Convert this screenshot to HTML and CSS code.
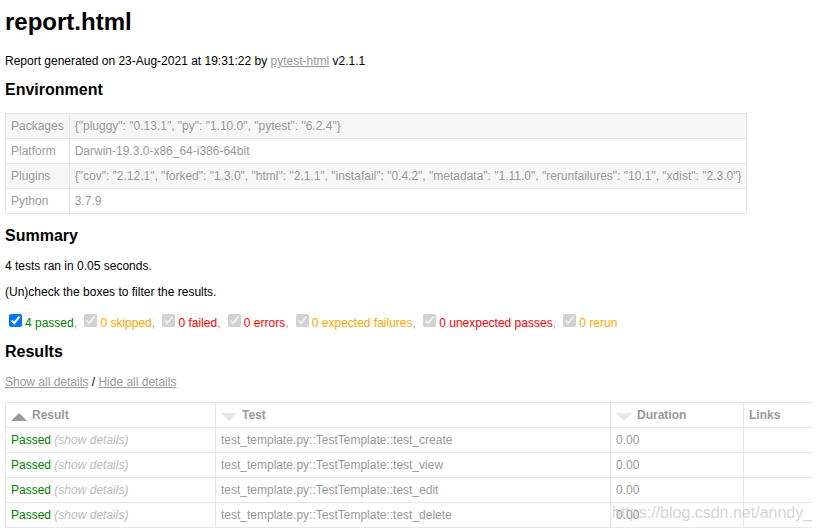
FILE: index.html
```html
<!DOCTYPE html>
<html>
<head>
<meta charset="utf-8">
<title>Test Report</title>
<link rel="stylesheet" href="styles.css">
</head>
<body>
<h1>report.html</h1>
<p>Report generated on 23-Aug-2021 at 19:31:22 by <a href="#">pytest-html</a> v2.1.1</p>
<h2>Environment</h2>
<table id="environment">
  <tr><td>Packages</td><td>{"pluggy": "0.13.1", "py": "1.10.0", "pytest": "6.2.4"}</td></tr>
  <tr><td>Platform</td><td>Darwin-19.3.0-x86_64-i386-64bit</td></tr>
  <tr><td>Plugins</td><td>{"cov": "2.12.1", "forked": "1.3.0", "html": "2.1.1", "instafail": "0.4.2", "metadata": "1.11.0", "rerunfailures": "10.1", "xdist": "2.3.0"}</td></tr>
  <tr><td>Python</td><td>3.7.9</td></tr>
</table>
<h2>Summary</h2>
<p>4 tests ran in 0.05 seconds. </p>
<p class="filter">(Un)check the boxes to filter the results.</p>
<div class="filters"><input checked type="checkbox" class="filter-box"><span class="passed">4 passed</span>, <input checked disabled type="checkbox" class="filter-box"><span class="skipped">0 skipped</span>, <input checked disabled type="checkbox" class="filter-box"><span class="failed">0 failed</span>, <input checked disabled type="checkbox" class="filter-box"><span class="error">0 errors</span>, <input checked disabled type="checkbox" class="filter-box"><span class="xfailed">0 expected failures</span>, <input checked disabled type="checkbox" class="filter-box"><span class="xpassed">0 unexpected passes</span>, <input checked disabled type="checkbox" class="filter-box"><span class="rerun">0 rerun</span></div>
<h2>Results</h2>
<p class="details-links"><a href="#">Show all details</a>&nbsp;/&nbsp;<a href="#">Hide all details</a></p>
<table id="results-table">
  <colgroup>
    <col class="col-result">
    <col class="col-test">
    <col class="col-duration">
    <col class="col-links">
  </colgroup>
  <thead>
    <tr>
      <th class="sortable asc active"><span class="sort-icon"></span>Result</th>
      <th class="sortable inactive"><span class="sort-icon"></span>Test</th>
      <th class="sortable inactive"><span class="sort-icon"></span>Duration</th>
      <th>Links</th>
    </tr>
  </thead>
  <tbody>
    <tr><td class="col-result passed">Passed<span class="expander"> (show details)</span></td><td>test_template.py::TestTemplate::test_create</td><td>0.00</td><td></td></tr>
    <tr><td class="col-result passed">Passed<span class="expander"> (show details)</span></td><td>test_template.py::TestTemplate::test_view</td><td>0.00</td><td></td></tr>
    <tr><td class="col-result passed">Passed<span class="expander"> (show details)</span></td><td>test_template.py::TestTemplate::test_edit</td><td>0.00</td><td></td></tr>
    <tr><td class="col-result passed">Passed<span class="expander"> (show details)</span></td><td>test_template.py::TestTemplate::test_delete</td><td>0.00</td><td></td></tr>
  </tbody>
</table>
<div class="watermark">https://blog.csdn.net/anndy_</div>
</body>
</html>
```
FILE: styles.css
```css
body {
  font-family: "Liberation Sans", Helvetica, Arial, sans-serif;
  font-size: 12px;
  color: #999;
  margin: 0 7px 0 5px;
}

h1 {
  font-size: 24px;
  color: black;
  margin: 8px 0 18px;
}

h2 {
  font-size: 16px;
  color: black;
  margin: 13px 0 14px;
}

p {
  color: black;
  margin: 12px 0;
}

a {
  color: #999;
}

table {
  border-collapse: collapse;
}

#environment td {
  padding: 5px;
  border: 1px solid #E6E6E6;
}

#environment tr:nth-child(odd) {
  background-color: #f6f6f6;
}

.filters {
  color: #999;
}

.filter-box {
  margin: 3px 3px 3px 4px;
}

.passed { color: green; }
.skipped, .xfailed, .rerun { color: orange; }
.failed, .error, .xpassed { color: red; }

.details-links {
  color: black;
  margin-bottom: 13px;
}

#results-table {
  border: 1px solid #e6e6e6;
  color: #999;
  font-size: 12px;
  width: 100%;
  table-layout: fixed;
}

.col-result { width: 210px; }
.col-test { width: 395px; }
.col-duration { width: 133px; }
.col-links { width: 69px; }

#results-table th,
#results-table td {
  padding: 5px;
  border: 1px solid #E6E6E6;
  text-align: left;
}

#results-table th {
  font-weight: bold;
}

.sort-icon {
  font-size: 0;
  float: left;
  margin-right: 5px;
  margin-top: 5px;
  width: 0;
  height: 0;
  border-left: 8px solid transparent;
  border-right: 8px solid transparent;
}

.inactive .sort-icon {
  border-top: 8px solid #E6E6E6;
}

.asc.active .sort-icon {
  border-bottom: 8px solid #999;
}

.expander {
  color: #BBB;
  font-style: italic;
}

.watermark {
  position: absolute;
  left: 612px;
  top: 504px;
  font-size: 16px;
  color: rgba(170, 170, 170, 0.5);
  white-space: nowrap;
}
```
